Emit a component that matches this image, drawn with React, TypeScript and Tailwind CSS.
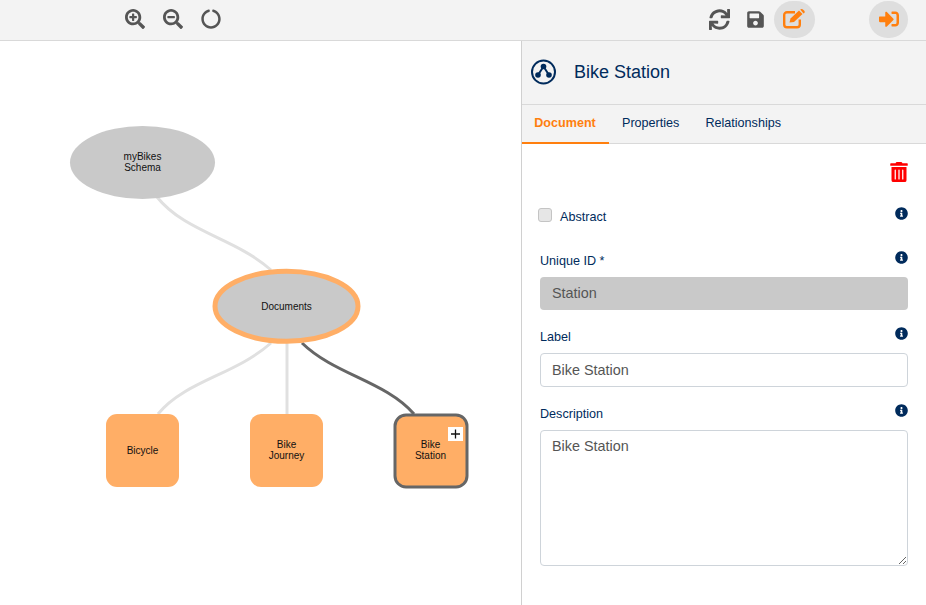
import { FaSearchPlus, FaSearchMinus, FaCircleNotch, FaSync, FaSave, FaSignInAlt, FaTrashAlt, FaInfoCircle } from 'react-icons/fa'

function Info() {
  return <FaInfoCircle className="text-[#002b5c]" size={13} />
}

// FA4 pencil-square-o, the FA5 regular one is too thin
function EditIcon() {
  return (
    <svg width="24" height="20" viewBox="0 0 24 20" fill="none">
      <path d="M12 3.200 H4 A2.800 2.800 0 0 0 1.200 6 V15.500 A2.800 2.800 0 0 0 4 18.300 H14 A2.800 2.800 0 0 0 16.800 15.500 V10.500" stroke="#ff7f0e" strokeWidth="2.400" />
      <path d="M6.500 13.500 L7.500 9.500 L16 1.500 L19.500 5 L11 13 Z" fill="#ff7f0e" />
      <path d="M17.200 0.500 L18.500 0 Q19.500 0 20.500 1 L21.500 2 Q22 3 21.500 3.800 L20.500 4.500 Z" fill="#ff7f0e" />
    </svg>
  )
}

function SchemaGraph() {
  return (
    <svg width="521" height="564" viewBox="0 41 521 564" className="block">
      <g fill="none" stroke="#e0e0e0" strokeWidth="3">
        <path d="M157 197 C185 232 235 238 271 270" />
        <path d="M271 343 C235 375 185 381 158 414" />
        <path d="M287 343 L287 414" />
      </g>
      <path d="M302 343 C335 375 385 381 414 414" fill="none" stroke="#666666" strokeWidth="3" />

      <ellipse cx="142.500" cy="162.500" rx="72.500" ry="36.500" fill="#c9c9c9" />
      <ellipse cx="286.500" cy="306.300" rx="71.500" ry="35" fill="#c9c9c9" stroke="#ffae66" strokeWidth="5" />
      <rect x="106" y="414" width="73" height="73" rx="11" fill="#ffae66" />
      <rect x="250" y="414" width="73" height="73" rx="11" fill="#ffae66" />
      <rect x="395" y="415" width="72" height="72" rx="11" fill="#ffae66" stroke="#666666" strokeWidth="3" />
      <rect x="448" y="427" width="15" height="14" fill="#ffffff" />
      <path d="M451 434 H460 M455.500 429.500 V438.500" stroke="#111111" strokeWidth="1.300" />

      <g fontSize="10" fill="#111111" textAnchor="middle" fontFamily="'Liberation Sans', sans-serif">
        <text x="142.500" y="160">myBikes</text>
        <text x="142.500" y="171">Schema</text>
        <text x="286.500" y="310">Documents</text>
        <text x="142.500" y="454">Bicycle</text>
        <text x="286.500" y="448">Bike</text>
        <text x="286.500" y="459">Journey</text>
        <text x="430.500" y="448">Bike</text>
        <text x="430.500" y="459">Station</text>
      </g>
    </svg>
  )
}

export default function App() {
  return (
    <div className="w-[926px] h-[605px] overflow-hidden bg-white font-['Liberation_Sans',sans-serif] text-[#002b5c]">
      {/* Toolbar */}
      <div className="h-[41px] bg-[#f3f3f3] border-b border-[#d9d9d9] flex items-center pb-[2px] text-[#555555]">
        <div className="ml-[125px] flex items-center gap-[18px]">
          <FaSearchPlus size={20} />
          <FaSearchMinus size={20} />
          <FaCircleNotch size={20} />
        </div>
        <div className="ml-[488px] flex items-center">
          <FaSync size={21} />
          <FaSave size={19} className="ml-[16px]" />
          <div className="ml-[9px] w-[41px] h-[37px] rounded-full bg-[#dedede] flex items-center justify-center">
            <EditIcon />
          </div>
          <div className="ml-[54px] w-[39px] h-[37px] rounded-full bg-[#dedede] flex items-center justify-center text-[#ff7f0e]">
            <FaSignInAlt size={20} />
          </div>
        </div>
      </div>

      <div className="flex h-[564px]">
        <div className="w-[522px] border-r border-[#d0d0d0] shrink-0">
          <SchemaGraph />
        </div>

        {/* Properties panel */}
        <div className="flex-1 min-w-0">
          <div className="h-[64px] bg-[#f3f3f3] border-b border-[#d9d9d9] flex items-center pl-[9px] pb-[1px]">
            <svg width="26" height="26" viewBox="0 0 26 26" fill="none">
              <circle cx="12.500" cy="13" r="11.500" stroke="#002b5c" strokeWidth="2" />
              <path d="M12.500 7.500 L7 16 M12.500 7.500 L18 16" stroke="#002b5c" strokeWidth="2" />
              <circle cx="12.500" cy="7.500" r="2.800" fill="#002b5c" />
              <circle cx="7" cy="16" r="2.800" fill="#002b5c" />
              <circle cx="18" cy="16" r="2.800" fill="#002b5c" />
            </svg>
            <span className="ml-[17px] text-[18px] leading-none">Bike Station</span>
          </div>

          <div className="h-[39px] bg-[#f3f3f3] border-b border-[#d9d9d9] flex text-[12.6px]">
            <div className="w-[87px] h-[39px] pr-[1px] border-b-2 border-[#ff7f0e] text-[#ff7f0e] font-bold flex items-center justify-center">
              Document
            </div>
            <div className="ml-[13px] pb-[2px] flex items-center">Properties</div>
            <div className="ml-[26px] pb-[2px] flex items-center">Relationships</div>
          </div>

          <div className="pl-[18px] pr-[18px]">
            <div className="flex justify-end pt-[18px]">
              <FaTrashAlt size={20} className="text-[#ff0000] -mr-[1px]" />
            </div>

            <div className="flex items-start justify-between mt-[25px] h-[20px]">
              <label className="flex items-center text-[12.6px] -ml-[2px]">
                <span className="w-[14px] h-[14px] rounded-[3px] border border-[#c4c4c4] bg-[#e6e6e6] -mt-[3px]" />
                <span className="ml-[8px] mt-[1px]">Abstract</span>
              </label>
              <Info />
            </div>

            <div className="flex items-start justify-between mt-[24px] h-[25px] text-[12.6px]">
              <span className="mt-[1px]">Unique ID *</span>
              <Info />
            </div>
            <div className="h-[33px] mt-[1px] rounded-[4px] bg-[#c9c9c9] flex items-center px-[12px] text-[14.4px] text-[#555555]">
              Station
            </div>

            <div className="flex items-start justify-between mt-[17px] h-[26px] text-[12.6px]">
              <span className="mt-[1px]">Label</span>
              <Info />
            </div>
            <div className="h-[34px] pt-[1px] rounded-[4px] border border-[#ced4da] flex items-center px-[11px] text-[14.4px] text-[#555555]">
              Bike Station
            </div>

            <div className="flex items-start justify-between mt-[17px] h-[26px] text-[12.6px]">
              <span className="mt-[1px]">Description</span>
              <Info />
            </div>
            <textarea
              readOnly
              defaultValue="Bike Station"
              className="block w-full h-[136px] rounded-[4px] border border-[#ced4da] px-[11px] py-[5px] text-[14.4px] leading-[20px] text-[#555555] outline-none"
            />
          </div>
        </div>
      </div>
    </div>
  )
}
